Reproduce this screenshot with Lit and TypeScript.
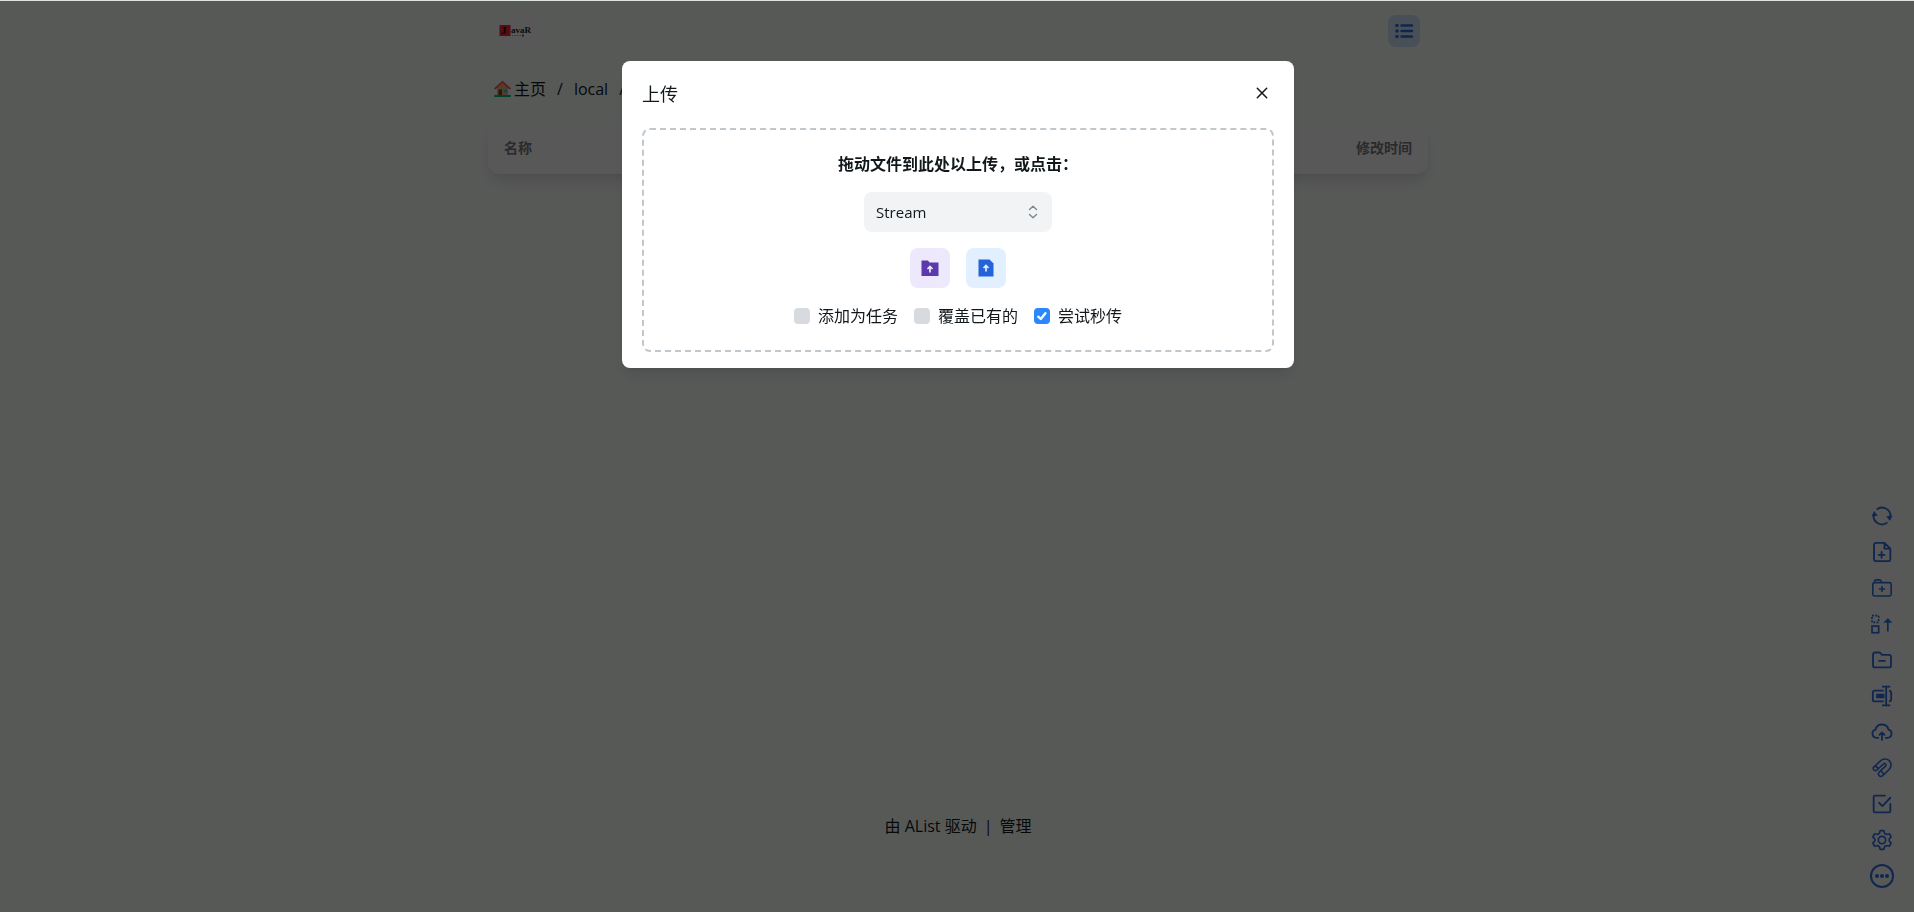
import { LitElement, html, css, svg } from "lit";
import { customElement, state } from "lit/decorators.js";

const stroke = (body: unknown, w = 2) => svg`<g fill="none" stroke="currentColor" stroke-width=${w} stroke-linecap="round" stroke-linejoin="round">${body}</g>`;

const tools = [
  { label: "刷新", icon: svg`<g fill="none" stroke="currentColor" stroke-width="2.2"><path d="M5.5 4.300A10.200 10.200 0 0 1 22.200 12.500M18.500 19.700A10.200 10.200 0 0 1 1.800 11.500"/></g><path d="M-.5 12.500 2.500 6 6.800 11.600ZM24.500 11.500 21.500 18 17.200 12.400Z" fill="currentColor"/>` },
  { label: "新建文件", icon: stroke(svg`<path d="M15 1H5A2.600 2.600 0 0 0 2.400 3.600V20.400A2.400 2.400 0 0 0 5 23H19.500A2.400 2.400 0 0 0 22 20.400V8ZM15 1V8H22M8 15.500H15M11.500 12V19"/>`, 2.2) },
  { label: "新建文件夹", icon: stroke(svg`<path d="M3 5.500H21A2 2 0 0 1 23 7.500V19.500A2 2 0 0 1 21 21.500H3A2 2 0 0 1 1 19.500V7.500A2 2 0 0 1 3 5.500ZM3 5.200V4.200A2 2 0 0 1 5 2.200H9.500L12 5.200M9 13.200H15M12 10.200V16.200"/>`, 1.9) },
  { label: "移动", icon: svg`<g fill="none" stroke="currentColor" stroke-width="2"><rect x="0" y="2" width="8" height="8" stroke-dasharray="2.400 1.600"/><rect x="0" y="14.500" width="8" height="8"/><path d="M19 21V7"/></g><path d="M13.500 10.500 19 5 24.500 10.500Z" fill="currentColor"/>` },
  { label: "复制", icon: stroke(svg`<path d="M3.500 3H9.500L12 5.800H20.500A2.300 2.300 0 0 1 22.800 8.100V18.500A2.300 2.300 0 0 1 20.500 20.800H3.500A2.300 2.300 0 0 1 1.200 18.500V5.300A2.300 2.300 0 0 1 3.500 3ZM8.500 13H15.500"/>`, 2.2) },
  { label: "重命名", icon: svg`<g fill="none" stroke="currentColor" stroke-width="2.200"><path d="M14 5.500H3A2 2 0 0 0 1 7.500V16.500A2 2 0 0 0 3 18.500H14M20.500 5.500C22.500 5.700 23 6.500 23 8.500V15.500C23 17.500 22.500 18.300 20.500 18.500M12 .800H22M17 .800V23.200M12 23.200H22"/></g><path d="M5 9.300H15V14.700H5Z" fill="currentColor"/>` },
  { label: "上传", icon: stroke(svg`<path d="M7.500 19H5.400A5 5 0 0 1 4.200 9.200A8 8 0 0 1 19.800 9.200A5 5 0 0 1 18.600 19H16.500M12 21.500V13.500M9 15.500 12 12.500 15 15.500"/>`, 2.2) },
  { label: "离线下载", icon: stroke(svg`<path d="M1.500 11.500 10.500 3.200A7.600 7.600 0 0 1 20.800 3.200A7.600 7.600 0 0 1 20.500 13.800L12.500 21.400A3 3 0 0 1 8.300 17.200L16.200 9.800A1.800 1.800 0 0 0 13.600 7.200L5.600 14.700A2.800 2.800 0 0 1 1.500 11.500ZM3.800 9.500 7.800 12.600M10.500 15.200 14.400 19.500"/>`, 1.900) },
  { label: "任务", icon: stroke(svg`<path d="M15.500 2H3.500A1.500 1.500 0 0 0 2 3.500V20.500A1.500 1.500 0 0 0 3.500 22H20.500A1.500 1.500 0 0 0 22 20.500V12M8.500 10.500 12.500 14.500 22 4.500"/>`, 2.2) },
  { label: "设置", icon: stroke(svg`<circle cx="12" cy="12" r="4.400"/><path d="M9.800 .8H14.200L15 4L17.500 5.400L20.800 4.500L23 8.400L20.700 10.600V13.400L23 15.600L20.800 19.500L17.500 18.600L15 20L14.200 23.200H9.800L9 20L6.500 18.600L3.200 19.500L1 15.600L3.300 13.400V10.600L1 8.400L3.200 4.500L6.500 5.400L9 4Z"/>`, 2) },
];

@customElement("app-root")
export class AppRoot extends LitElement {
  @state() private options = [
    { label: "添加为任务", checked: false },
    { label: "覆盖已有的", checked: false },
    { label: "尝试秒传", checked: true },
  ];

  static styles = css`
    :host {
      display: block;
      font: 16px/24px "Open Sans", "Noto Sans CJK SC", sans-serif;
      color: #11181c;
    }
    * { box-sizing: border-box; }
    button { border: 0; padding: 0; background: none; color: inherit; font: inherit; cursor: pointer; display: grid; place-items: center; }
    a { color: inherit; text-decoration: none; }
    h1, h2 { margin: 0; }
    .page {
      min-height: 100vh;
      display: flex;
      flex-direction: column;
      align-items: center;
      background: #e0e4e1;
      border-top: 1px solid #e0e4e1;
      padding-left: 2px;
    }
    .column { width: min(940px, calc(100% - 32px)); flex: 1; display: flex; flex-direction: column; }
    .header { height: 60px; padding: 0 8px; display: flex; align-items: center; justify-content: space-between; }
    .brand { width: 44px; height: 44px; border-radius: 50%; background: #e6e2e2; display: block; }
    .initial { font: 700 11px "Liberation Serif", serif; fill: #111; }
    .rest { font: 700 9px "Liberation Serif", serif; fill: #222; }
    .layout { width: 32px; height: 32px; border-radius: 8px; background: #bccbe0; color: #2764c4; }
    .crumbs { display: flex; height: 24px; margin: 16px 0 20px; padding: 0 6px; }
    .home { width: 17px; height: 18px; margin: 3px 3px 0 0; }
    .home-link { display: flex; }
    .sep { margin: 0 11px; }
    .list {
      display: flex;
      justify-content: space-between;
      align-items: center;
      height: 53px;
      padding: 0 16px;
      border-radius: 12px;
      background: #e6e2e2;
      color: #687076;
      font-size: 14px;
      line-height: 20px;
      font-weight: 700;
      box-shadow: 0 10px 15px -3px rgba(0, 0, 0, 0.1), 0 4px 6px -2px rgba(0, 0, 0, 0.05);
    }
    .footer { display: flex; gap: 7px; padding: 0 0 74px; line-height: 24px; }
    .toolbar {
      position: fixed;
      right: 13px;
      bottom: 16px;
      width: 38px;
      display: flex;
      flex-direction: column;
      align-items: center;
      gap: 12px;
      padding: 6px 0 8px;
      border-radius: 8px;
      background: #e5e2e2;
      color: #2865c8;
    }
    .tool { width: 24px; height: 24px; }
    .tool svg { width: 20px; height: 20px; overflow: visible; display: block; }
    .tool .more { width: 24px; height: 24px; }
    .backdrop {
      position: fixed;
      inset: 1px 0 0;
      background: rgba(0, 0, 0, 0.61);
      display: flex;
      justify-content: center;
      align-items: flex-start;
      padding: 60px 16px 0 18px;
    }
    .dialog {
      width: min(672px, 100%);
      background: #fff;
      border-radius: 8px;
      padding: 20px 20px 16px;
      box-shadow: 0 10px 15px -3px rgba(0, 0, 0, 0.1), 0 4px 6px -2px rgba(0, 0, 0, 0.05);
    }
    .title-row { display: flex; justify-content: space-between; align-items: flex-start; height: 27px; margin-bottom: 20px; }
    .title { font-size: 18px; line-height: 27px; font-weight: 400; }
    .close { width: 24px; height: 24px; }
    .drop {
      border: 2px dashed #c1c8cd;
      border-radius: 8px;
      padding: 22px;
      display: flex;
      flex-direction: column;
      align-items: center;
      gap: 16px;
    }
    .prompt { font-size: 16px; line-height: 24px; font-weight: 700; }
    .picker { position: relative; width: 188px; height: 40px; }
    .select {
      appearance: none;
      width: 100%;
      height: 100%;
      border: 0;
      border-radius: 8px;
      background: #f1f3f5;
      color: inherit;
      font: inherit;
      font-size: 15px;
      padding: 0 36px 0 12px;
    }
    .chevrons { position: absolute; right: 12px; top: 13px; pointer-events: none; color: #7e868c; }
    .actions, .options { display: flex; gap: 16px; }
    .action { width: 40px; height: 40px; border-radius: 8px; }
    .folder { background: #ede8fc; color: #5b3bab; }
    .file { background: #e1efff; color: #2563d9; }
    .option { display: flex; align-items: center; gap: 8px; }
    .check { appearance: none; margin: 0; width: 16px; height: 16px; border-radius: 4px; background: #d7dbdf; }
    .check:checked {
      background: #2b87fb url("data:image/svg+xml,%3Csvg xmlns='http://www.w3.org/2000/svg' viewBox='0 0 16 16'%3E%3Cpath d='M4.300 8.600 6.800 11 11.400 5.200' fill='none' stroke='white' stroke-width='2.300' stroke-linecap='round' stroke-linejoin='round'/%3E%3C/svg%3E");
    }
  `;

  private toggle(i: number) {
    this.options = this.options.map((o, n) => (n === i ? { ...o, checked: !o.checked } : o));
  }

  render() {
    return html`
      <div class="page">
        <div class="column">
          <header class="header">
            <a href="#" aria-label="首页">
              <svg class="brand" viewBox="0 0 44 44">
                <rect x="3.500" y="16" width="11" height="11" fill="#d9232b" />
                <text class="initial" x="5" y="25">J</text>
                <text class="rest" x="15" y="24">avaR</text>
                <path d="M16 26.500h9" stroke="#999" stroke-dasharray="1.500 1" /><rect x="26" y="25.500" width="2" height="2" fill="#d9232b" />
              </svg>
            </a>
            <button class="layout" aria-label="布局">
              <svg width="20" height="20" viewBox="0 0 20 20" fill="currentColor"><circle cx="3" cy="4.500" r="1.800" /><circle cx="3" cy="10" r="1.800" /><circle cx="3" cy="15.500" r="1.800" /><path d="M7.500 4.500h10.500M7.500 10h10.500M7.500 15.500h10.500" stroke="currentColor" stroke-width="2.400" stroke-linecap="round" /></svg>
            </button>
          </header>
          <nav class="crumbs">
            <a class="home-link" href="#">
              <svg class="home" viewBox="0 0 17 18"><rect y="15" width="17" height="2" rx="1" fill="#00a86b" /><path d="M3 8 8.500 3 14 8v7H3Z" fill="#d9a066" /><rect x="4.500" y="9.500" width="3.500" height="5.500" fill="#6b3a2a" /><rect x="10" y="9.500" width="3" height="3" fill="#4aa3e0" /><path d="M1.200 8.500 8.500 1.800 15.800 8.500" fill="none" stroke="#e5484d" stroke-width="1.700" stroke-linecap="round" /></svg>主页</a>
            <span class="sep">/</span><a href="#">local</a><span class="sep">/</span>
          </nav>
          <div class="list"><span>名称</span><span>修改时间</span></div>
        </div>
        <footer class="footer"><a href="#">由 AList 驱动</a><span>|</span><a href="#">管理</a></footer>
        <div class="toolbar">
          ${tools.map((t) => html`<button class="tool" aria-label=${t.label}><svg viewBox="0 0 24 24">${t.icon}</svg></button>`)}
          <button class="tool" aria-label="更多">
            <svg class="more" viewBox="0 0 24 24" fill="currentColor"><circle cx="12" cy="12" r="11" fill="none" stroke="currentColor" stroke-width="2" /><circle cx="7" cy="12" r="2" /><circle cx="12" cy="12" r="2" /><circle cx="17" cy="12" r="2" /></svg>
          </button>
        </div>
      </div>
      <div class="backdrop">
        <section class="dialog" role="dialog" aria-labelledby="title">
          <div class="title-row">
            <h1 class="title" id="title">上传</h1>
            <button class="close" aria-label="关闭"><svg width="12" height="12" viewBox="0 0 12 12"><path d="M1.300 1.300l9.400 9.400M10.700 1.300l-9.400 9.400" stroke="currentColor" stroke-width="1.500" stroke-linecap="round" /></svg></button>
          </div>
          <div class="drop">
            <h2 class="prompt">拖动文件到此处以上传，或点击：</h2>
            <div class="picker">
              <select class="select" aria-label="上传方式"><option>Stream</option></select>
              <svg class="chevrons" width="14" height="14" viewBox="0 0 14 14" fill="none" stroke="currentColor" stroke-width="1.400" stroke-linecap="round" stroke-linejoin="round"><path d="M3.500 4.500 7 1.300 10.500 4.500M3.500 9.500 7 12.700 10.500 9.500" /></svg>
            </div>
            <div class="actions">
              <button class="action folder" aria-label="上传文件夹"><svg width="20" height="20" viewBox="0 0 20 20"><path d="M1.500 2.500H8L9.500 4.500H18.500V18H1.500Z" fill="currentColor" /><path d="M10 14.500V9M7.500 11 10 8.500 12.500 11" fill="none" stroke="#ede8fc" stroke-width="1.700" /></svg></button>
              <button class="action file" aria-label="上传文件"><svg width="20" height="20" viewBox="0 0 20 20"><path d="M2.500 1.500H13.500L17.500 5.500V18.500H2.500Z" fill="currentColor" /><path d="M10 13.500V8M7.500 10 10 7.500 12.500 10" fill="none" stroke="#e1efff" stroke-width="1.700" /></svg></button>
            </div>
            <div class="options">
              ${this.options.map((o, i) => html`<label class="option"><input class="check" type="checkbox" .checked=${o.checked} @change=${() => this.toggle(i)} />${o.label}</label>`)}
            </div>
          </div>
        </section>
      </div>
    `;
  }
}
